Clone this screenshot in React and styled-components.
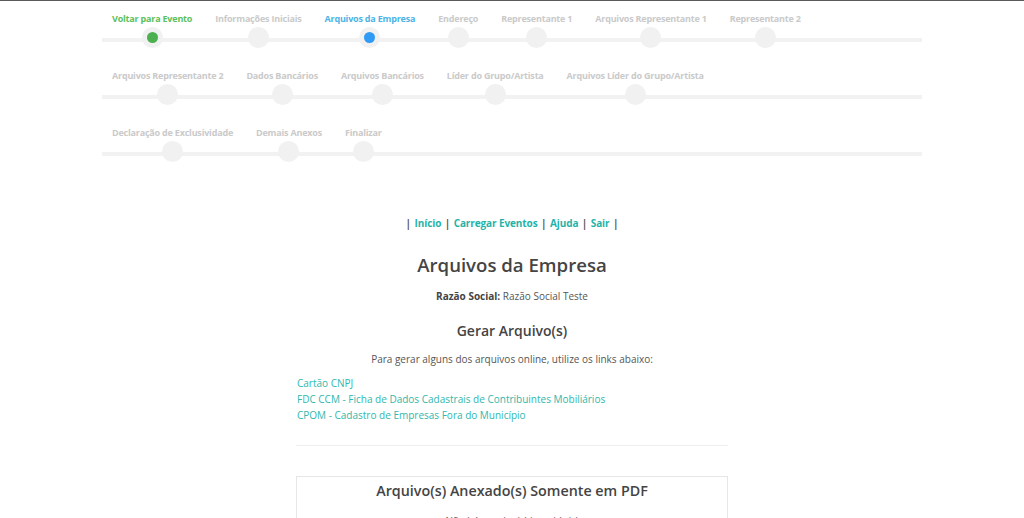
import React from 'react'
import styled, { createGlobalStyle } from 'styled-components'

const GlobalStyle = createGlobalStyle`
  html, body {
    margin: 0;
    padding: 0;
    background: #fff;
  }
  body {
    font-family: "Open Sans", "Liberation Sans", sans-serif;
    color: #555;
    border-top: 1px solid #5a5a5a;
  }
`

const steps = [
  [
    { label: 'Voltar para Evento', state: 'done' },
    { label: 'Informações Iniciais' },
    { label: 'Arquivos da Empresa', state: 'active' },
    { label: 'Endereço' },
    { label: 'Representante 1' },
    { label: 'Arquivos Representante 1' },
    { label: 'Representante 2' },
  ],
  [
    { label: 'Arquivos Representante 2' },
    { label: 'Dados Bancários' },
    { label: 'Arquivos Bancários' },
    { label: 'Líder do Grupo/Artista' },
    { label: 'Arquivos Líder do Grupo/Artista' },
  ],
  [
    { label: 'Declaração de Exclusividade' },
    { label: 'Demais Anexos' },
    { label: 'Finalizar' },
  ],
]

const labelColors = { done: '#5cbf5c', active: '#4cb4e6' }
const dotColors = { done: '#4caf50', active: '#2f9bf5' }

const Stepper = styled.div`
  width: 820px;
  margin: 0 auto;
  padding-top: 11px;
`

const StepRow = styled.div`
  position: relative;
  display: flex;
  height: 57px;

  &::before {
    content: '';
    position: absolute;
    left: 0;
    right: 0;
    top: 26px;
    height: 4px;
    background: #f2f2f2;
  }
`

const Step = styled.div`
  position: relative;
  display: flex;
  flex-direction: column;
  align-items: center;
  padding: 0 11px 0 10px;
  margin-right: 2px;
`

const StepLabel = styled.span`
  font-family: "Open Sans", sans-serif;
  font-weight: 700;
  font-size: 9px;
  letter-spacing: -0.2px;
  line-height: 14px;
  white-space: nowrap;
  color: ${p => labelColors[p.$state] || '#cacaca'};
`

const Dot = styled.span`
  margin-top: 1px;
  width: 21px;
  height: 21px;
  border-radius: 50%;
  background: #f1f1f1;
  display: flex;
  align-items: center;
  justify-content: center;

  &::after {
    content: '';
    width: 11px;
    height: 11px;
    border-radius: 50%;
    background: ${p => dotColors[p.$state] || 'transparent'};
  }
`

const Main = styled.div`
  width: 432px;
  margin: 32px auto 0;
  font-size: 10px;
`

const Nav = styled.p`
  margin: 0;
  text-align: center;
  font-weight: 700;
  font-size: 10px;
  letter-spacing: -0.1px;
  line-height: 16px;
  color: #555;
`

const NavLink = styled.a`
  color: #1fb3aa;
  text-decoration: none;
  margin: 0 1px;
`

const Title = styled.h1`
  margin: 22px 0 0;
  text-align: center;
  font-size: 18.6px;
  font-weight: 600;
  line-height: 24px;
  color: #444;
`

const Info = styled.p`
  margin: ${p => (p.$tight ? '10px' : '11px')} 0 0;
  text-align: center;
  line-height: 16px;
  color: #555;

  b {
    font-weight: 700;
    color: #444;
  }
`

const SubTitle = styled.h2`
  margin: 17px 0 0;
  text-align: center;
  font-size: 14px;
  font-weight: 600;
  line-height: 20px;
  color: #444;
`

const LinkList = styled.div`
  display: flex;
  flex-direction: column;
  margin-top: 8px;
  padding-left: 1px;
`

const FileLink = styled.a`
  color: #2fb7ae;
  text-decoration: none;
  line-height: 16px;
`

const Divider = styled.hr`
  border: 0;
  border-top: 1px solid #eee;
  margin: 22px 0 0;
`

const Box = styled.div`
  margin-top: 30px;
  border: 1px solid #e6e6e6;
  padding: 5px 10px 20px;
`

const BoxTitle = styled.h3`
  margin: 0;
  text-align: center;
  font-size: 14.3px;
  font-weight: 600;
  line-height: 18px;
  color: #444;
`

const Empty = styled.p`
  margin: 14px 0 0;
  text-align: center;
  color: #555;
  font-size: 10px;
`

const App = () => {
  const navItems = ['Início', 'Carregar Eventos', 'Ajuda', 'Sair']
  return (
    <>
      <GlobalStyle />
      <Stepper>
        {steps.map((row, i) => (
          <StepRow key={i}>
            {row.map(s => (
              <Step key={s.label}>
                <StepLabel $state={s.state}>{s.label}</StepLabel>
                <Dot $state={s.state} />
              </Step>
            ))}
          </StepRow>
        ))}
      </Stepper>

      <Main>
        <Nav>
          |{' '}
          {navItems.map(n => (
            <React.Fragment key={n}>
              <NavLink href="#">{n}</NavLink> |{' '}
            </React.Fragment>
          ))}
        </Nav>
        <Title>Arquivos da Empresa</Title>
        <Info>
          <b>Razão Social:</b> Razão Social Teste
        </Info>
        <SubTitle>Gerar Arquivo(s)</SubTitle>
        <Info $tight>Para gerar alguns dos arquivos online, utilize os links abaixo:</Info>
        <LinkList>
          <FileLink href="#">Cartão CNPJ</FileLink>
          <FileLink href="#">FDC CCM - Ficha de Dados Cadastrais de Contribuintes Mobiliários</FileLink>
          <FileLink href="#">CPOM - Cadastro de Empresas Fora do Município</FileLink>
        </LinkList>
        <Divider />
        <Box>
          <BoxTitle>Arquivo(s) Anexado(s) Somente em PDF</BoxTitle>
          <Empty>Não há arquivo(s) inserido(s)</Empty>
        </Box>
      </Main>
    </>
  )
}

export default App
